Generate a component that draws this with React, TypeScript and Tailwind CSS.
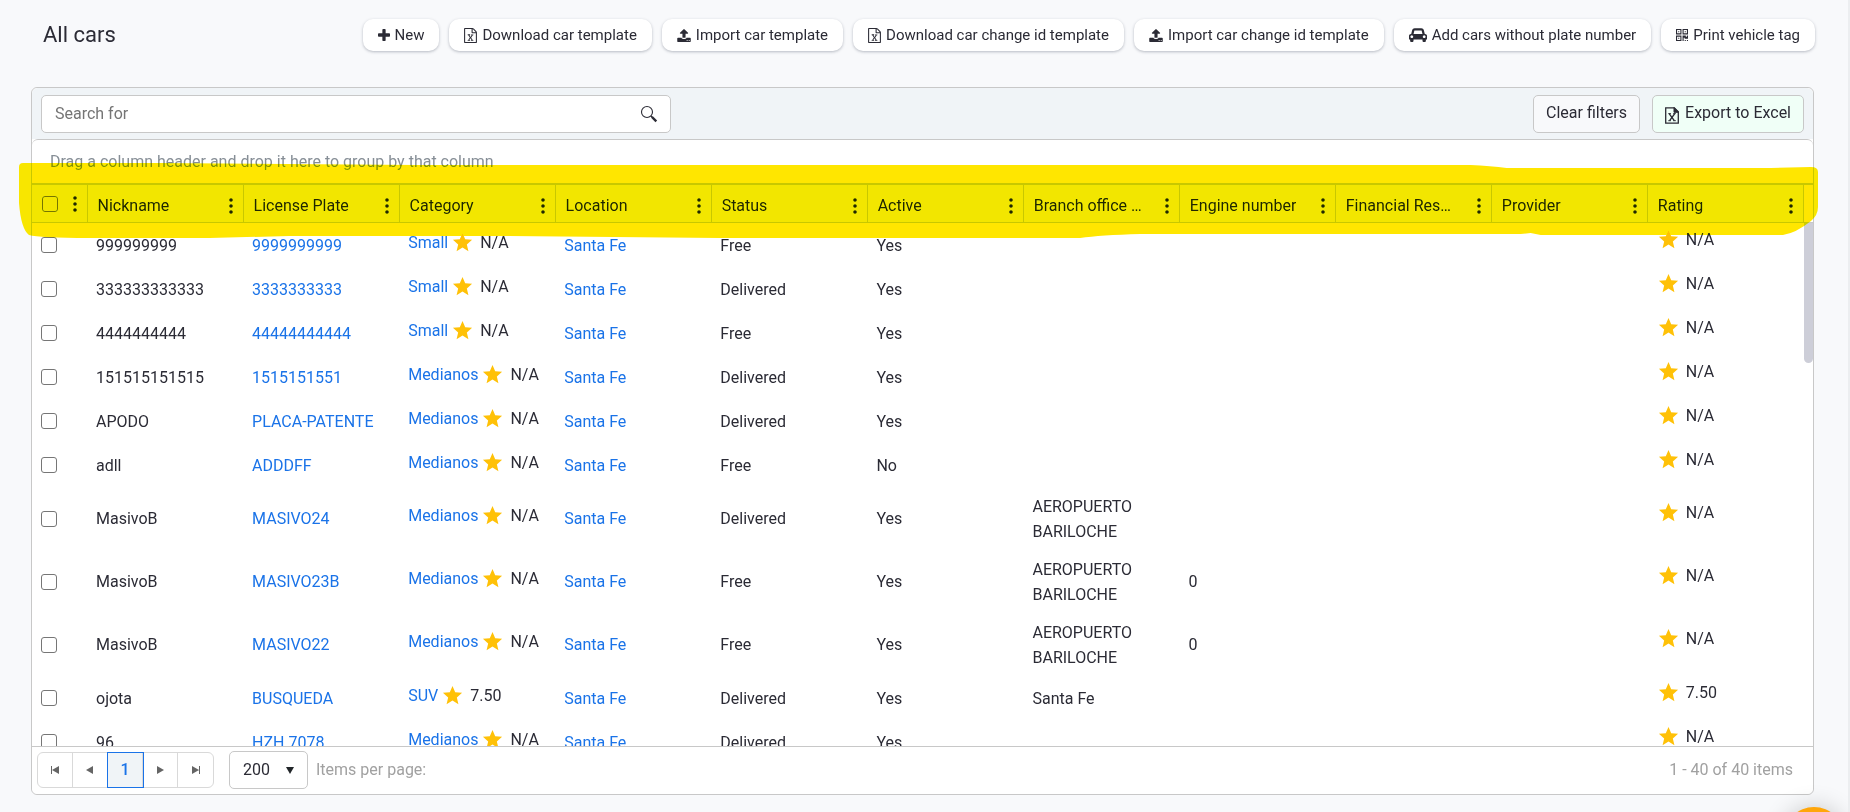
import { useState } from 'react';
import { MdStar } from 'react-icons/md';

const ICONS = {
  plus: {
    box: '0 0 1408 1408',
    size: 'h-3 w-3',
    d: 'M1408 608v192q0 40-28 68t-68 28H896v416q0 40-28 68t-68 28H608q-40 0-68-28t-28-68V896H96q-40 0-68-28T0 800V608q0-40 28-68t68-28h416V96q0-40 28-68t68-28h192q40 0 68 28t28 68v416h416q40 0 68 28t28 68z',
  },
  excel: {
    box: '0 0 1536 1792',
    size: 'h-[15px] w-[13px]',
    d: 'M1468 380q28 28 48 76t20 88v1152q0 40-28 68t-68 28H96q-40 0-68-28t-28-68V96q0-40 28-68T96 0h896q40 0 88 20t76 48zm-444-244v376h376q-10-29-22-41l-313-313q-12-12-41-22zm384 1528V640H992q-40 0-68-28t-28-68V128H128v1536h1280zm-979-234v106h281v-106h-75l103-161q5-7 10-16.5t7.5-13.5 3.5-4h2q1 4 5 10 2 4 4.5 7.5t6 8 6.5 8.5l107 161h-76v106h291v-106h-68l-192-273 195-282h67v-107H828v107h74l-103 159q-4 7-10 16.5t-9 13.5l-2 3h-2q-1-4-5-10-6-11-17-23L648 868h76V761H434v107h68l189 272-194 290h-68z',
  },
  upload: {
    box: '0 64 1664 1600',
    size: 'h-[13px] w-[14px]',
    d: 'M1280 1472q0-26-19-45t-45-19-45 19-19 45 19 45 45 19 45-19 19-45zm256 0q0-26-19-45t-45-19-45 19-19 45 19 45 45 19 45-19 19-45zm128-224v320q0 40-28 68t-68 28H96q-40 0-68-28t-28-68v-320q0-40 28-68t68-28h427q21 56 70.5 92t110.5 36h256q61 0 110.5-36t70.5-92h427q40 0 68 28t28 68zm-325-648q-17 40-59 40h-256v448q0 26-19 45t-45 19H704q-26 0-45-19t-19-45V640H384q-42 0-59-40-17-39 14-69L787 83q18-19 45-19t45 19l448 448q31 30 14 69z',
  },
  car: {
    box: '0 128 2048 1536',
    size: 'h-[14px] w-[18px]',
    d: 'M480 1088q0-66-47-113t-113-47-113 47-47 113 47 113 113 47 113-47 47-113zm36-320h1016l-89-357q-2-8-14-17.5t-21-9.5H640q-9 0-21 9.5T605 411zm1372 320q0-66-47-113t-113-47-113 47-47 113 47 113 113 47 113-47 47-113zm160-96v384q0 14-9 23t-23 9h-96v128q0 80-56 136t-136 56-136-56-56-136v-128H512v128q0 80-56 136t-136 56-136-56-56-136v-128H32q-14 0-23-9t-9-23V992q0-93 65.5-158.5T224 768h28l105-419q23-94 104-157.5T640 128h768q98 0 179 63.5T1691 349l105 419h28q93 0 158.5 65.5T2048 992z',
  },
  qr: {
    box: '0 0 1408 1408',
    size: 'h-3 w-3',
    d: 'M384 1024v128H256v-128h128zm0-768v128H256V256h128zm768 0v128h-128V256h128zM128 1279h384V896H128v383zm0-767h384V128H128v384zm768 0h384V128H896v384zM640 768v640H0V768h640zm512 512v128h-128v-128h128zm256 0v128h-128v-128h128zm0-512v384h-384v-128H896v384H768V768h384v128h128V768h128zM640 0v640H0V0h640zm768 0v640H768V0h640z',
  },
};

type IconName = keyof typeof ICONS;

function Icon({ name }: { name: IconName }) {
  const icon = ICONS[name];
  return (
    <svg viewBox={icon.box} className={`shrink-0 ${icon.size}`} fill="currentColor" aria-hidden="true">
      <path d={icon.d} />
    </svg>
  );
}

const actions: { icon: IconName; label: string }[] = [
  { icon: 'plus', label: 'New' },
  { icon: 'excel', label: 'Download car template' },
  { icon: 'upload', label: 'Import car template' },
  { icon: 'excel', label: 'Download car change id template' },
  { icon: 'upload', label: 'Import car change id template' },
  { icon: 'car', label: 'Add cars without plate number' },
  { icon: 'qr', label: 'Print vehicle tag' },
];

const columns = [
  'Nickname',
  'License Plate',
  'Category',
  'Location',
  'Status',
  'Active',
  'Branch office location',
  'Engine number',
  'Financial Responsible',
  'Provider',
  'Rating',
];

interface Car {
  nickname: string;
  plate: string;
  category: string;
  rating: string;
  status: string;
  active: string;
  branch?: string;
  engine?: string;
}

const cars: Car[] = [
  { nickname: '999999999', plate: '9999999999', category: 'Small', rating: 'N/A', status: 'Free', active: 'Yes' },
  { nickname: '333333333333', plate: '3333333333', category: 'Small', rating: 'N/A', status: 'Delivered', active: 'Yes' },
  { nickname: '4444444444', plate: '44444444444', category: 'Small', rating: 'N/A', status: 'Free', active: 'Yes' },
  { nickname: '151515151515', plate: '1515151551', category: 'Medianos', rating: 'N/A', status: 'Delivered', active: 'Yes' },
  { nickname: 'APODO', plate: 'PLACA-PATENTE', category: 'Medianos', rating: 'N/A', status: 'Delivered', active: 'Yes' },
  { nickname: 'adll', plate: 'ADDDFF', category: 'Medianos', rating: 'N/A', status: 'Free', active: 'No' },
  { nickname: 'MasivoB', plate: 'MASIVO24', category: 'Medianos', rating: 'N/A', status: 'Delivered', active: 'Yes', branch: 'AEROPUERTO BARILOCHE' },
  { nickname: 'MasivoB', plate: 'MASIVO23B', category: 'Medianos', rating: 'N/A', status: 'Free', active: 'Yes', branch: 'AEROPUERTO BARILOCHE', engine: '0' },
  { nickname: 'MasivoB', plate: 'MASIVO22', category: 'Medianos', rating: 'N/A', status: 'Free', active: 'Yes', branch: 'AEROPUERTO BARILOCHE', engine: '0' },
  { nickname: 'ojota', plate: 'BUSQUEDA', category: 'SUV', rating: '7.50', status: 'Delivered', active: 'Yes', branch: 'Santa Fe' },
  { nickname: '96', plate: 'HZH 7078', category: 'Medianos', rating: 'N/A', status: 'Delivered', active: 'Yes' },
];

function Dots() {
  return (
    <svg viewBox="0 0 4 16" className="h-4 w-1" fill="currentColor" aria-hidden="true">
      <circle cx="2" cy="2" r="1.8" />
      <circle cx="2" cy="8" r="1.8" />
      <circle cx="2" cy="14" r="1.8" />
    </svg>
  );
}

function Checkbox({ label }: { label: string }) {
  return (
    <input
      type="checkbox"
      aria-label={label}
      className="block h-4 w-4 appearance-none rounded-[3px] border border-[#767676] bg-transparent checked:bg-[#1a73e8]"
    />
  );
}

function Rating({ value }: { value: string }) {
  return (
    <span className="inline-flex items-center gap-1.5">
      <MdStar className="h-[23px] w-[23px] text-[#ffc107]" />
      {value}
    </span>
  );
}

function CellLink({ children }: { children: string }) {
  return (
    <a href="#" className="text-[#1a73e8] hover:underline">
      {children}
    </a>
  );
}

function ColumnWidths() {
  return (
    <colgroup>
      <col className="w-[55px]" />
      {columns.map((column) => (
        <col key={column} />
      ))}
    </colgroup>
  );
}

function PagerButton({ label, d }: { label: string; d: string }) {
  return (
    <button aria-label={label} className="flex w-[35px] items-center justify-center text-[#656565]">
      <svg viewBox="0 0 16 16" className="h-4 w-4" fill="currentColor" aria-hidden="true">
        <path d={d} />
      </svg>
    </button>
  );
}

export default function App() {
  const [search, setSearch] = useState('');

  return (
    <div className="relative flex h-screen min-h-[600px] flex-col overflow-hidden border-r-2 border-[#eceef0] bg-[#f8f9fb] pr-[33px] pb-[17px] pl-[31px] font-['Roboto',sans-serif] text-base text-[#2b2b35]">
      <header className="flex items-center justify-between pt-[19px] pl-3">
        <h1 className="text-[22px] leading-8">All cars</h1>
        <div className="flex gap-2.5">
          {actions.map(({ icon, label }) => (
            <button
              key={label}
              className="flex h-8 items-center gap-[5px] rounded-[10px] bg-white px-[15px] text-[15px] whitespace-nowrap shadow-[0_1px_3px_rgba(60,70,90,0.35)]"
            >
              <Icon name={icon} />
              {label}
            </button>
          ))}
        </div>
      </header>

      <section className="relative mt-9 mr-px flex min-h-0 flex-1 flex-col rounded-md border border-[#c8c8c8] bg-white">
        <div className="flex items-center justify-between rounded-t-md bg-[#f0f4f7] px-[9px] pt-[7px] pb-1.5">
          <div className="flex h-[38px] w-[630px] items-center rounded-[5px] border border-[#c8c8c8] bg-white pr-3 pl-[13px]">
            <input
              type="text"
              aria-label="Search for"
              placeholder="Search for"
              value={search}
              onChange={(e) => setSearch(e.target.value)}
              className="min-w-0 flex-1 bg-transparent outline-none placeholder:text-[#757575]"
            />
            <button aria-label="Search">
              <svg viewBox="0 0 18 18" className="h-[18px] w-[18px]" fill="none" stroke="currentColor" aria-hidden="true">
                <circle cx="7" cy="7" r="5.5" strokeWidth="1.1" />
                <path d="M11 11l1.5 1.5" strokeWidth="1.5" />
                <path d="M12 12l4.3 4.3" strokeWidth="2.4" />
              </svg>
            </button>
          </div>
          <div className="flex gap-3">
            <button className="h-[38px] rounded-[5px] border border-[#c8c8c8] bg-[#f8f9fb] px-3 pb-0.5">
              Clear filters
            </button>
            <button className="flex h-[38px] items-center gap-1.5 rounded-[5px] border border-[#c8c8c8] bg-[#f0fff7] px-3 pb-0.5">
              <svg viewBox="0 0 14 17" className="mt-1 h-[17px] w-3.5" fill="none" stroke="currentColor" aria-hidden="true">
                <path d="M.7 .8h8.6l4 4v11.4H.7z" strokeWidth="1.3" />
                <path d="M9 .5v4.8h4.6z" fill="currentColor" strokeWidth="1" />
                <path d="M4.3 6.8l5 6.8M9.6 6.8l-5 6.8" strokeWidth="1.4" />
                <path d="M3.3 6.6h2.6M8.2 6.6h2.6M3.3 13.7h2.6M8.2 13.7h2.6" strokeWidth="1" />
              </svg>
              Export to Excel
            </button>
          </div>
        </div>

        <div className="flex min-h-0 flex-1 flex-col rounded-md border-t border-[#c8c8c8] bg-white">
          <div className="h-[43px] shrink-0 px-[18px] pt-2.5 text-[#868e96]">
            Drag a column header and drop it here to group by that column
          </div>

          <div className="shrink-0 border-t-2 border-b border-[#c8c8c8] pr-[9px]">
            <table className="w-full table-fixed border-collapse bg-[#f2f4f8] text-[#212529]">
              <ColumnWidths />
              <thead>
                <tr className="h-[37px]">
                  <th className="border-r border-[#c8c8c8] pl-2.5">
                    <div className="flex items-center justify-between pr-2.5">
                      <Checkbox label="Select all cars" />
                      <button aria-label="Options">
                        <Dots />
                      </button>
                    </div>
                  </th>
                  {columns.map((column) => (
                    <th key={column} className="border-r border-[#c8c8c8] px-2.5 text-left font-normal">
                      <div className="flex items-center justify-between pt-1">
                        <span className="mr-[21px] truncate">{column}</span>
                        <button aria-label={`${column} options`} className="shrink-0">
                          <Dots />
                        </button>
                      </div>
                    </th>
                  ))}
                </tr>
              </thead>
            </table>
          </div>

          <div className="flex min-h-0 flex-1 overflow-hidden">
            <div className="min-w-0 flex-1">
              <table className="w-full table-fixed border-collapse leading-[25px]">
                <ColumnWidths />
                <tbody>
                  {cars.map((car, index) => (
                    <tr key={index} className={car.branch?.startsWith('AERO') ? 'h-[63px]' : 'h-11'}>
                      <td className="pl-[9px]">
                        <Checkbox label={`Select ${car.nickname}`} />
                      </td>
                      <td className="px-[9px]">{car.nickname}</td>
                      <td className="px-[9px]">
                        <CellLink>{car.plate}</CellLink>
                      </td>
                      <td className="px-[9px] pb-1.5">
                        <span className="inline-flex items-center gap-[3px]">
                          <CellLink>{car.category}</CellLink>
                          <Rating value={car.rating} />
                        </span>
                      </td>
                      <td className="px-[9px]">
                        <CellLink>Santa Fe</CellLink>
                      </td>
                      <td className="px-[9px]">{car.status}</td>
                      <td className="px-[9px]">{car.active}</td>
                      <td className="px-[9px]">{car.branch}</td>
                      <td className="px-[9px]">{car.engine}</td>
                      <td />
                      <td />
                      <td className="px-[9px] pb-1.5">
                        <Rating value={car.rating} />
                      </td>
                    </tr>
                  ))}
                </tbody>
              </table>
            </div>
            <div className="w-[9px] shrink-0">
              <div className="h-[140px] rounded-b-full bg-[#cdced8]" />
            </div>
          </div>

          <footer className="flex h-12 shrink-0 items-center border-t border-[#c8c8c8] pr-5 pb-0.5 pl-[5px] text-[#a1a1a1]">
            <div className="flex h-9 divide-x divide-[#d9d9d9] rounded-md border border-[#d9d9d9]">
              <PagerButton label="First page" d="M4 4h1v8H4zM12 4v8L5 8z" />
              <PagerButton label="Previous page" d="M11 4v8L4 8z" />
              <button
                aria-current="page"
                className="w-[35px] bg-[#f0f4f7] font-medium text-[#1a73e8] outline outline-[#1a73e8]"
              >
                1
              </button>
              <PagerButton label="Next page" d="M5 4v8l7-4z" />
              <PagerButton label="Last page" d="M11 4h1v8h-1zM4 4v8l7-4z" />
            </div>
            <div className="relative ml-[15px] text-[#2b2b35]">
              <select
                id="page-size"
                defaultValue="200"
                className="h-[38px] w-[79px] appearance-none rounded-[5px] border border-[#c8c8c8] bg-white pl-[13px]"
              >
                <option>50</option>
                <option>100</option>
                <option>200</option>
              </select>
              <svg viewBox="0 0 8 7" className="pointer-events-none absolute top-4 right-3.5 h-[7px] w-2" fill="#212529" aria-hidden="true">
                <path d="M0 0h8L4 7z" />
              </svg>
            </div>
            <label htmlFor="page-size" className="ml-2">
              Items per page:
            </label>
            <span className="ml-auto">1 - 40 of 40 items</span>
          </footer>
        </div>

        {/* Marker stroke over the column header */}
        <svg
          viewBox="0 0 1797 78"
          preserveAspectRatio="none"
          className="pointer-events-none absolute top-[75px] -left-[13px] h-[78px] w-[calc(100%+18px)] max-w-none mix-blend-darken"
          aria-hidden="true"
        >
          <path
            fill="#ffe600"
            d="M4 0H140L400 2H1450Q1470 3 1486 5H1750L1790 4Q1797 4 1797 9V44Q1797 52 1790 58Q1775 70 1762 72H1520L1510 70L1500 71H1120Q1080 72 1060 75H700L480 73H270L190 75H70Q20 75 10 72Q2 66 0 40V4Q0 0 4 0Z"
          />
        </svg>
      </section>

      <button
        aria-label="Open chat"
        className="absolute right-1 -bottom-[55px] h-[60px] w-[60px] rounded-full bg-[#ffa60a] shadow-[0_0_24px_rgba(0,0,0,0.2)]"
      />
    </div>
  );
}
